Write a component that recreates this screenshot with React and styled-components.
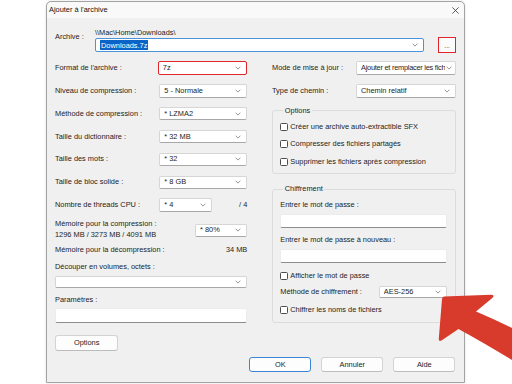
import React from "react";
import styled, { createGlobalStyle } from "styled-components";

const GlobalStyle = createGlobalStyle`
  html, body { margin: 0; padding: 0; background: #ffffff; }
  body {
    font-family: "Liberation Sans", Arial, sans-serif;
    font-size: 7.4px;
    color: #1c1c1c;
  }
  * { box-sizing: border-box; }
`;

const Page = styled.div`
  position: relative;
  width: 512px;
  height: 384px;
  overflow: hidden;
  background: #ffffff;
  padding-top: 1px;
`;

const Window = styled.div`
  margin-left: 46px;
  width: 419px;
  height: 382px;
  background: #f0f0f0;
  border: 1px solid #a3a3a3;
  border-radius: 5px 5px 0 0;
  display: flex;
  flex-direction: column;
  box-shadow: 0 0 3px rgba(0, 0, 0, 0.12);
`;

const TitleBar = styled.div`
  flex: none;
  height: 16px;
  display: flex;
  align-items: center;
  justify-content: space-between;
  padding: 0 5px 0 2px;
  background: #f9f9f9;
  border-radius: 5px 5px 0 0;
`;

const Title = styled.span`
  line-height: 10px;
  color: #111;
`;

const Body = styled.div`
  flex: 1;
  display: flex;
  flex-direction: column;
  padding: 9.7px 8px 0 8px;
`;

const ArchiveRow = styled.div`
  display: flex;
`;

const ArchiveLabel = styled.span`
  width: 40px;
  flex: none;
  padding-top: 4.3px;
  line-height: 10px;
`;

const ArchiveField = styled.div`
  flex: 1;
  display: flex;
  flex-direction: column;
`;

const PathText = styled.span`
  line-height: 10px;
  white-space: nowrap;
`;

const ComboLine = styled.div`
  display: flex;
  align-items: center;
  gap: 14px;
  margin-top: -1px;
`;

const Columns = styled.div`
  display: flex;
  gap: 24.7px;
  margin-top: 3.2px;
`;

const LeftCol = styled.div`
  width: 192.3px;
  flex: none;
  display: flex;
  flex-direction: column;
`;

const RightCol = styled.div`
  flex: 1;
  display: flex;
  flex-direction: column;
`;

const FieldRow = styled.div`
  display: flex;
  align-items: center;
  justify-content: space-between;
  height: 22.87px;
`;

const Label = styled.span`
  line-height: 10px;
  white-space: nowrap;
`;

const ComboBox = styled.div`
  flex: ${(p) => (p.$w ? "none" : "1")};
  width: ${(p) => (p.$w ? `${p.$w}px` : "auto")};
  height: ${(p) => p.$h || 13.5}px;
  display: flex;
  align-items: center;
  justify-content: space-between;
  padding: 0 ${(p) => p.$pr ?? 5}px 0 4px;
  background: #ffffff;
  border: ${(p) => (p.$alert ? "1.5px solid #e2252b" : p.$focus ? "1px solid #4a93d8" : "1px solid #d6d6d6")};
  border-bottom-color: ${(p) => (p.$alert ? "#e2252b" : p.$focus ? "#4a93d8" : "#a8a8a8")};
  border-radius: 2px;
  overflow: hidden;
  letter-spacing: ${(p) => (p.$tight ? "-0.25px" : "normal")};
`;

const ComboText = styled.span`
  line-height: 10px;
  white-space: nowrap;
  overflow: hidden;
  flex: 1;
  min-width: 0;
`;

const Selected = styled.span`
  background: #0a64c8;
  color: #ffffff;
  padding: 0.5px 1px;
`;

const ChevronIcon = styled.svg`
  flex: none;
  margin-left: ${(p) => p.$gap ?? 3}px;
`;

const Chevron = ({ gap }) => (
  <ChevronIcon $gap={gap} width="6" height="4" viewBox="0 0 6 4">
    <path d="M0.6 0.7 L3 3.1 L5.4 0.7" fill="none" stroke="#7a7a7a" strokeWidth="0.8" />
  </ChevronIcon>
);

const Combo = ({ children, gap, ...rest }) => (
  <ComboBox {...rest}>
    <ComboText>{children}</ComboText>
    <Chevron gap={gap} />
  </ComboBox>
);

const BrowseButton = styled.div`
  flex: none;
  width: 17.7px;
  height: 16.7px;
  display: flex;
  align-items: center;
  justify-content: center;
  padding-top: 2px;
  border: 1.5px solid #e2252b;
  background: #fbfbfb;
  color: #555;
  font-size: 7px;
  line-height: 8px;
`;

const ThreadGroup = styled.div`
  width: 88px;
  flex: none;
  display: flex;
  align-items: center;
  justify-content: space-between;
`;

const MemoryRow = styled.div`
  display: flex;
  align-items: center;
  justify-content: space-between;
  margin-top: 1px;
`;

const MemoryLines = styled.div`
  display: flex;
  flex-direction: column;
  line-height: 11.6px;
  white-space: nowrap;
`;

const MemCombo = styled.div`
  margin-top: 2.5px;
`;

const InfoRow = styled.div`
  display: flex;
  justify-content: space-between;
  line-height: 11.6px;
  margin-top: 3.3px;
`;

const StackLabel = styled.span`
  line-height: 10px;
  margin-top: ${(p) => p.$mt || 0}px;
  white-space: nowrap;
`;

const Spaced = styled.div`
  margin-top: ${(p) => p.$mt || 0}px;
  display: flex;
`;

const TextInput = styled.div`
  width: 100%;
  height: ${(p) => p.$h || 14.4}px;
  background: #ffffff;
  border: 1px solid #ececec;
  border-bottom: 1px solid #8d8d8d;
  border-radius: 2px;
  margin-top: ${(p) => p.$mt || 0}px;
`;

const PushButton = styled.div`
  width: ${(p) => p.$w || 62}px;
  height: 15.7px;
  display: flex;
  align-items: center;
  justify-content: center;
  background: #fdfdfd;
  border: 1px solid ${(p) => (p.$primary ? "#3a86d4" : "#d3d3d3")};
  border-bottom-color: ${(p) => (p.$primary ? "#3a86d4" : "#bcbcbc")};
  border-radius: 3px;
  line-height: 10px;
  margin-top: ${(p) => p.$mt || 0}px;
`;

const Footer = styled.div`
  display: flex;
  justify-content: flex-end;
  gap: 10px;
  margin-top: 6px;
  padding-right: 0.7px;
`;

const GroupBox = styled.fieldset`
  margin: ${(p) => p.$mt || 0}px 0 0 0;
  padding: ${(p) => p.$pad};
  border: 1px solid #dcdcdc;
  border-radius: 3px;
  min-width: 0;
  display: flex;
  flex-direction: column;
`;

const Legend = styled.legend`
  padding: 0 1.5px;
  margin-left: 3px;
  line-height: 10px;
`;

const CheckRow = styled.div`
  display: flex;
  align-items: center;
  gap: 2px;
  height: ${(p) => p.$h || 12}px;
  margin-top: ${(p) => p.$mt || 0}px;
`;

const CheckBox = styled.span`
  width: 8px;
  height: 8px;
  flex: none;
  border: 0.9px solid #4d4d4d;
  border-radius: 1.5px;
  background: #ffffff;
`;

const MethodRow = styled.div`
  display: flex;
  align-items: center;
  justify-content: space-between;
  height: 12px;
  margin-top: 4.7px;
`;

const ArrowLayer = styled.svg`
  position: absolute;
  left: 0;
  top: 0;
  pointer-events: none;
`;

const Check = ({ children, ...rest }) => (
  <CheckRow {...rest}>
    <CheckBox />
    <Label>{children}</Label>
  </CheckRow>
);

const leftFields = [
  ["Niveau de compression :", "5 - Normale"],
  ["Méthode de compression :", "*  LZMA2"],
  ["Taille du dictionnaire :", "*  32 MB"],
  ["Taille des mots :", "*  32"],
  ["Taille de bloc solide :", "*  8 GB"],
];

export default function App() {
  return (
    <>
      <GlobalStyle />
      <Page>
        <Window>
          <TitleBar>
            <Title>Ajouter à l'archive</Title>
            <svg width="7" height="7" viewBox="0 0 7 7">
              <path d="M0.4 0.4 L6.6 6.6 M6.6 0.4 L0.4 6.6" stroke="#333" strokeWidth="0.8" />
            </svg>
          </TitleBar>
          <Body>
            <ArchiveRow>
              <ArchiveLabel>Archive :</ArchiveLabel>
              <ArchiveField>
                <PathText>\\Mac\Home\Downloads\</PathText>
                <ComboLine>
                  <Combo $focus>
                    <Selected>Downloads.7z</Selected>
                  </Combo>
                  <BrowseButton>...</BrowseButton>
                </ComboLine>
              </ArchiveField>
            </ArchiveRow>
            <Columns>
              <LeftCol>
                <FieldRow>
                  <Label>Format de l'archive :</Label>
                  <Combo $w={89.5} $h={14.5} $alert>
                    7z
                  </Combo>
                </FieldRow>
                {leftFields.map(([label, value]) => (
                  <FieldRow key={label}>
                    <Label>{label}</Label>
                    <Combo $w={88}>{value}</Combo>
                  </FieldRow>
                ))}
                <FieldRow>
                  <Label>Nombre de threads CPU :</Label>
                  <ThreadGroup>
                    <Combo $w={53}>*  4</Combo>
                    <Label>/ 4</Label>
                  </ThreadGroup>
                </FieldRow>
                <MemoryRow>
                  <MemoryLines>
                    <span>Mémoire pour la compression :</span>
                    <span>1296 MB / 3273 MB / 4091 MB</span>
                  </MemoryLines>
                  <MemCombo>
                    <Combo $w={52.3}>*  80%</Combo>
                  </MemCombo>
                </MemoryRow>
                <InfoRow>
                  <span>Mémoire pour la décompression :</span>
                  <span>34 MB</span>
                </InfoRow>
                <StackLabel $mt={6.8}>Découper en volumes, octets :</StackLabel>
                <Spaced $mt={3.2}>
                  <Combo $h={12.6}> </Combo>
                </Spaced>
                <StackLabel $mt={6.9}>Paramètres :</StackLabel>
                <TextInput $mt={2.5} $h={15} />
                <PushButton $w={63.3} $mt={12.4}>
                  Options
                </PushButton>
              </LeftCol>
              <RightCol>
                <FieldRow>
                  <Label>Mode de mise à jour :</Label>
                  <Combo $w={100} $pr={3} gap={1.5} $tight>
                    Ajouter et remplacer les fich
                  </Combo>
                </FieldRow>
                <FieldRow>
                  <Label>Type de chemin :</Label>
                  <Combo $w={100}>Chemin relatif</Combo>
                </FieldRow>
                <GroupBox $mt={3.6} $pad="1.8px 7px 2px 7.3px">
                  <Legend>Options</Legend>
                  <Check $h={17.8}>Créer une archive auto-extractible SFX</Check>
                  <Check $h={17.8}>Compresser des fichiers partagés</Check>
                  <Check $h={17.8}>Supprimer les fichiers après compression</Check>
                </GroupBox>
                <GroupBox $mt={10} $pad="5.6px 7.7px 5.7px 7.3px">
                  <Legend>Chiffrement</Legend>
                  <StackLabel>Entrer le mot de passe :</StackLabel>
                  <TextInput $mt={4} />
                  <StackLabel $mt={6.6}>Entrer le mot de passe à nouveau :</StackLabel>
                  <TextInput $mt={4} />
                  <Check $mt={6.6}>Afficher le mot de passe</Check>
                  <MethodRow>
                    <Label>Méthode de chiffrement :</Label>
                    <Combo $w={68.5} $h={12}>AES-256</Combo>
                  </MethodRow>
                  <Check $mt={6}>Chiffrer les noms de fichiers</Check>
                </GroupBox>
              </RightCol>
            </Columns>
            <Footer>
              <PushButton $primary>OK</PushButton>
              <PushButton>Annuler</PushButton>
              <PushButton>Aide</PushButton>
            </Footer>
          </Body>
        </Window>
        <ArrowLayer width="512" height="384" viewBox="0 0 512 384">
          <path
            d="M444 296.5 L491 294.8 Q495 294.8 492.6 297.8 L476 311.5 Q496 320 512 328 L512 360 Q484 343 458.5 329 L441.5 340.5 Q438.6 342 438.8 338.6 L442 299 Q442.3 296.6 444 296.5 Z"
            fill="#d83a2c"
          />
        </ArrowLayer>
      </Page>
    </>
  );
}
